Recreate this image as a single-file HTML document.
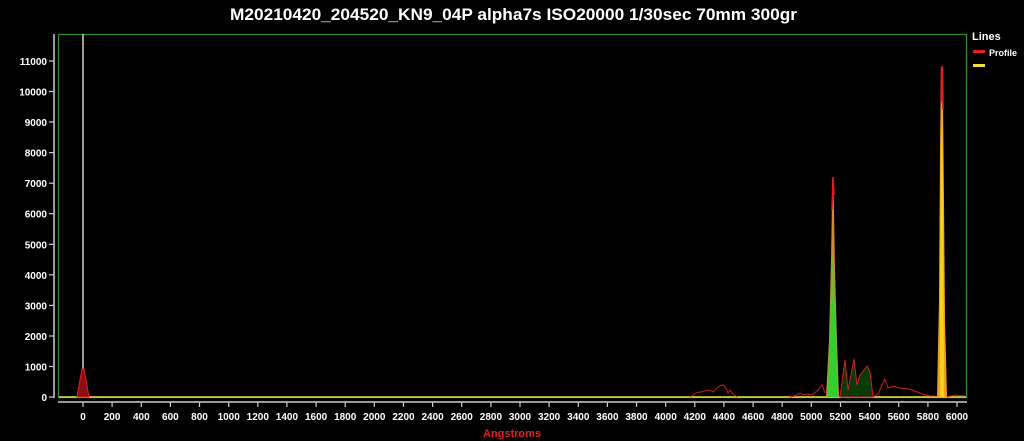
<!DOCTYPE html>
<html><head><meta charset="utf-8"><style>
html,body{margin:0;padding:0;background:#000;width:1024px;height:441px;overflow:hidden}
svg{display:block}
text{font-family:"Liberation Sans",Arial,sans-serif;fill:#fff}
.y{font-size:10px;font-weight:bold;text-anchor:end}
.x{font-size:10px;font-weight:bold;text-anchor:middle}
</style></head><body>
<svg width="1024" height="441" viewBox="0 0 1024 441">
<rect width="1024" height="441" fill="#000"/>
<text x="230" y="20" font-size="17" font-weight="bold" textLength="567" lengthAdjust="spacingAndGlyphs">M20210420_204520_KN9_04P alpha7s ISO20000 1/30sec 70mm 300gr</text>
<rect x="58.5" y="34.5" width="908" height="363" fill="none" stroke="#2f8a2f" stroke-width="1.3"/>
<line x1="54" y1="34" x2="54" y2="398" stroke="#ccc" stroke-width="1.5"/>
<g stroke="#ccc" stroke-width="1.2">
<line x1="49" y1="61" x2="54" y2="61"/><line x1="49" y1="91.5" x2="54" y2="91.5"/><line x1="49" y1="122" x2="54" y2="122"/><line x1="49" y1="152.6" x2="54" y2="152.6"/><line x1="49" y1="183.2" x2="54" y2="183.2"/><line x1="49" y1="213.7" x2="54" y2="213.7"/><line x1="49" y1="244.3" x2="54" y2="244.3"/><line x1="49" y1="274.8" x2="54" y2="274.8"/><line x1="49" y1="305.4" x2="54" y2="305.4"/><line x1="49" y1="336" x2="54" y2="336"/><line x1="49" y1="366.5" x2="54" y2="366.5"/><line x1="49" y1="397" x2="54" y2="397"/>
</g>
<g>
<text class="y" x="47" y="65">11000</text><text class="y" x="47" y="95.5">10000</text><text class="y" x="47" y="126">9000</text><text class="y" x="47" y="156.6">8000</text><text class="y" x="47" y="187.2">7000</text><text class="y" x="47" y="217.7">6000</text><text class="y" x="47" y="248.3">5000</text><text class="y" x="47" y="278.8">4000</text><text class="y" x="47" y="309.4">3000</text><text class="y" x="47" y="340">2000</text><text class="y" x="47" y="370.5">1000</text><text class="y" x="47" y="401">0</text>
</g>
<line x1="58" y1="402" x2="967" y2="402" stroke="#ccc" stroke-width="1.5"/>
<g stroke="#ccc" stroke-width="1.2">
<line x1="83" y1="402" x2="83" y2="407"/><line x1="112.1" y1="402" x2="112.1" y2="407"/><line x1="141.3" y1="402" x2="141.3" y2="407"/><line x1="170.4" y1="402" x2="170.4" y2="407"/><line x1="199.5" y1="402" x2="199.5" y2="407"/><line x1="228.7" y1="402" x2="228.7" y2="407"/><line x1="257.8" y1="402" x2="257.8" y2="407"/><line x1="286.9" y1="402" x2="286.9" y2="407"/><line x1="316.1" y1="402" x2="316.1" y2="407"/><line x1="345.2" y1="402" x2="345.2" y2="407"/><line x1="374.3" y1="402" x2="374.3" y2="407"/><line x1="403.5" y1="402" x2="403.5" y2="407"/><line x1="432.6" y1="402" x2="432.6" y2="407"/><line x1="461.7" y1="402" x2="461.7" y2="407"/><line x1="490.9" y1="402" x2="490.9" y2="407"/><line x1="520" y1="402" x2="520" y2="407"/><line x1="549.1" y1="402" x2="549.1" y2="407"/><line x1="578.3" y1="402" x2="578.3" y2="407"/><line x1="607.4" y1="402" x2="607.4" y2="407"/><line x1="636.5" y1="402" x2="636.5" y2="407"/><line x1="665.7" y1="402" x2="665.7" y2="407"/><line x1="694.8" y1="402" x2="694.8" y2="407"/><line x1="723.9" y1="402" x2="723.9" y2="407"/><line x1="753.1" y1="402" x2="753.1" y2="407"/><line x1="782.2" y1="402" x2="782.2" y2="407"/><line x1="811.3" y1="402" x2="811.3" y2="407"/><line x1="840.5" y1="402" x2="840.5" y2="407"/><line x1="869.6" y1="402" x2="869.6" y2="407"/><line x1="898.7" y1="402" x2="898.7" y2="407"/><line x1="927.9" y1="402" x2="927.9" y2="407"/><line x1="957" y1="402" x2="957" y2="407"/>
</g>
<g>
<text class="x" x="83" y="420">0</text><text class="x" x="112.1" y="420">200</text><text class="x" x="141.3" y="420">400</text><text class="x" x="170.4" y="420">600</text><text class="x" x="199.5" y="420">800</text><text class="x" x="228.7" y="420">1000</text><text class="x" x="257.8" y="420">1200</text><text class="x" x="286.9" y="420">1400</text><text class="x" x="316.1" y="420">1600</text><text class="x" x="345.2" y="420">1800</text><text class="x" x="374.3" y="420">2000</text><text class="x" x="403.5" y="420">2200</text><text class="x" x="432.6" y="420">2400</text><text class="x" x="461.7" y="420">2600</text><text class="x" x="490.9" y="420">2800</text><text class="x" x="520" y="420">3000</text><text class="x" x="549.1" y="420">3200</text><text class="x" x="578.3" y="420">3400</text><text class="x" x="607.4" y="420">3600</text><text class="x" x="636.5" y="420">3800</text><text class="x" x="665.7" y="420">4000</text><text class="x" x="694.8" y="420">4200</text><text class="x" x="723.9" y="420">4400</text><text class="x" x="753.1" y="420">4600</text><text class="x" x="782.2" y="420">4800</text><text class="x" x="811.3" y="420">5000</text><text class="x" x="840.5" y="420">5200</text><text class="x" x="869.6" y="420">5400</text><text class="x" x="898.7" y="420">5600</text><text class="x" x="927.9" y="420">5800</text><text class="x" x="957" y="420">6000</text>
</g>
<text x="512" y="437" font-size="11" font-weight="bold" text-anchor="middle" style="fill:#e02020">Angstroms</text>
<line x1="83" y1="34" x2="83" y2="397" stroke="#eee" stroke-width="1.3"/>
<line x1="59" y1="397" x2="966" y2="397" stroke="#e8e04a" stroke-width="1.5"/>
<path d="M77 397 L80 380 L82 369 L84 369 L86 380 L89 397 Z" fill="#8a1010" stroke="#e02020" stroke-width="1"/>
<path d="M690 397 L696 393 L705 391 L710 390 L713 392 L716 389 L720 386 L723 385 L726 388 L728 393 L730 390 L733 394 L737 397" fill="none" stroke="#c82020" stroke-width="1"/>
<path d="M790 397 L795 396 L800 393 L803 395 L808 394 L812 395 L818 390 L822 385 L825 393" fill="none" stroke="#c82020" stroke-width="1"/>
<path d="M826 397 L829 340 L831 260 L832 200 L833 177 L834 210 L835 270 L837 340 L839 397 Z" fill="#d08a30"/>
<path d="M827 397 L829.5 330 L831 280 L833 250 L835 290 L836.5 330 L838 397 Z" fill="#80b030"/>
<path d="M828 397 L830 340 L832 300 L834 300 L836 340 L837 397 Z" fill="#2fd02f"/>
<path d="M832 210 L833 177 L834 195" fill="none" stroke="#e02020" stroke-width="1.5"/>
<path d="M840 397 L845 360 L848 390 L851 375 L854 359 L857 385 L860 375 L864 370 L867 366 L870 372 L873 397 Z" fill="#0a3a0a" stroke="#d02020" stroke-width="1"/>
<path d="M873 397 L878 394 L882 385 L885 379 L888 388 L893 386 L900 388 L908 389 L915 391 L922 394 L930 396 L935 396" fill="none" stroke="#c82020" stroke-width="1"/>
<path d="M937 397 L939 300 L940 150 L941 70 L942 67 L943 100 L944 200 L945 320 L947 397 Z" fill="#f0a020"/>
<path d="M940 300 L941 150 L942 120 L943 180 L943.5 300 L944 397 L940 397 Z" fill="#f8d020"/>
<path d="M941 100 L941.5 67 L942.5 67 L943 110" fill="#e02020" stroke="#e02020" stroke-width="1.5"/>
<path d="M947 397 L955 395 L965 396" fill="none" stroke="#c82020" stroke-width="1"/>
<text x="972" y="40" font-size="11" font-weight="bold">Lines</text>
<rect x="973" y="50" width="12" height="3" fill="#e02020"/>
<text x="989" y="56" font-size="9" font-weight="bold">Profile</text>
<rect x="973" y="64" width="12" height="3" fill="#f0e040"/>
</svg>
</body></html>
